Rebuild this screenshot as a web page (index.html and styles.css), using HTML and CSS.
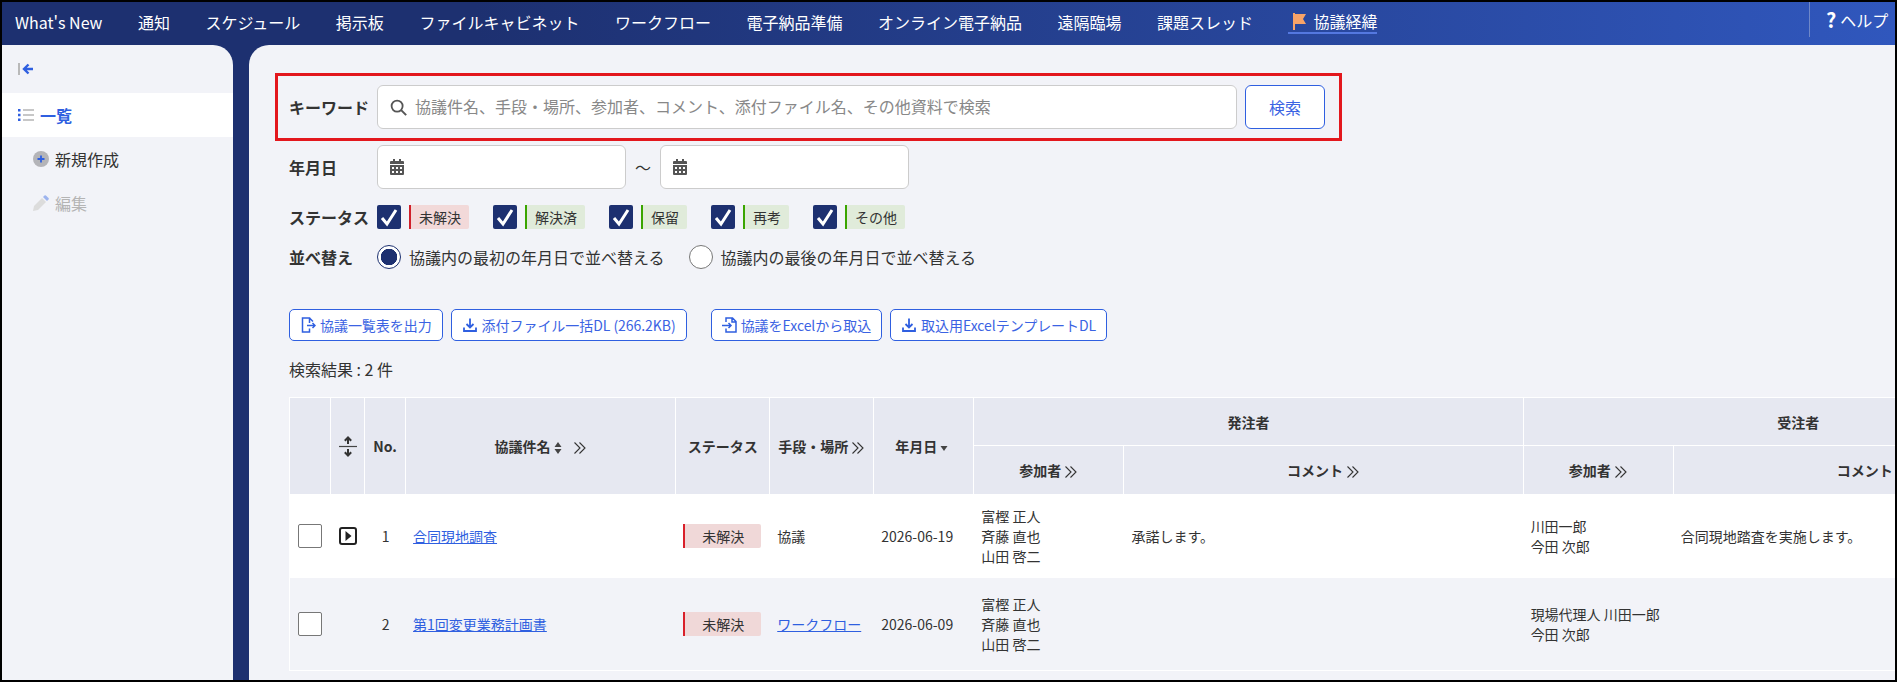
FILE: index.html

```html
<!DOCTYPE html>
<html lang="ja">
<head>
    <meta charset="UTF-8">
    <title>協議経緯</title>
    <link rel="stylesheet" href="styles.css">
</head>
<body>
    <svg class="sprite" width="0" height="0">
        <symbol id="chevrons" viewBox="0 0 14 14">
            <path d="M1.5 1.5 7 7l-5.500 5.500M6.500 1.500 12 7l-5.500 5.500" fill="none" stroke="currentColor" stroke-width="1.100"/>
        </symbol>
        <symbol id="check" viewBox="0 0 24 24">
            <path d="M5 13 10 19 19 5" fill="none" stroke="#fff" stroke-width="3"/>
        </symbol>
        <symbol id="calendar" viewBox="0 0 14 16">
            <path d="M3 0h2v2h4V0h2v2h2a1 1 0 0 1 1 1v2H0V3a1 1 0 0 1 1-1h2zM0 6h14v9a1 1 0 0 1-1 1H1a1 1 0 0 1-1-1zm2 2v2h2V8zm4 0v2h2V8zm4 0v2h2V8zm-8 4v2h2v-2zm4 0v2h2v-2zm4 0v2h2v-2z" fill="#555" fill-rule="evenodd"/>
        </symbol>
        <symbol id="download" viewBox="0 0 16 16">
            <path d="M8 1.500v8.500M4.500 7 8 10.500 11.500 7M2 10.500v3.500h12v-3.500" fill="none" stroke="#2f5fe0" stroke-width="1.800"/>
        </symbol>
    </svg>

    <div class="app">
        <header class="topbar">
            <nav class="topnav">
                <a>What's New</a>
                <a>通知</a>
                <a>スケジュール</a>
                <a>掲示板</a>
                <a>ファイルキャビネット</a>
                <a>ワークフロー</a>
                <a>電子納品準備</a>
                <a>オンライン電子納品</a>
                <a>遠隔臨場</a>
                <a>課題スレッド</a>
                <a class="current">
                    <svg width="15" height="17" viewBox="0 0 15 17"><path d="M1 0h2v17H1zM3 1h11l-3 5 3 5H3z" fill="#f8a368"/></svg>
                    協議経緯
                </a>
            </nav>
            <a class="help"><b>?</b>ヘルプ</a>
        </header>

        <div class="columns">
            <aside class="sidebar">
                <div class="collapse">
                    <svg width="16" height="14" viewBox="0 0 16 14"><path d="M1 1v12" stroke="#b9b9b9" stroke-width="2"/><path d="M15 7H6M10.500 2.500 6 7l4.500 4.500" fill="none" stroke="#2f5fe0" stroke-width="2.400"/></svg>
                </div>
                <a class="side-item active">
                    <svg width="16" height="14" viewBox="0 0 16 14"><path d="M5 2h11M5 7h11M5 12h11" stroke="#b5b5b5" stroke-width="1.600"/><path d="M0 1h2.500v2.500H0zM0 5.800h2.500v2.500H0zM0 10.600h2.500v2.500H0z" fill="#2f5fe0"/></svg>
                    一覧
                </a>
                <a class="side-item sub">
                    <svg width="16" height="16" viewBox="0 0 16 16"><circle cx="8" cy="8" r="8" fill="#b4b4b8"/><path d="M8 4.500v7M4.500 8h7" stroke="#2f5fe0" stroke-width="1.800"/></svg>
                    新規作成
                </a>
                <a class="side-item sub disabled">
                    <svg width="16" height="16" viewBox="0 0 16 16"><path d="M0 16l1-5 8-8 4 4-8 8z" fill="#dcdcdc"/><path d="M10 2l1.500-1.500a1 1 0 0 1 1.400 0l2.600 2.600a1 1 0 0 1 0 1.400L14 6z" fill="#9db4ee"/></svg>
                    編集
                </a>
            </aside>

            <main class="content">
                <div class="form-row search-row">
                    <label class="form-label">キーワード</label>
                    <div class="text-box keyword">
                        <svg width="17" height="17" viewBox="0 0 16 16"><circle cx="6.700" cy="6.700" r="5.200" fill="none" stroke="#555" stroke-width="1.700"/><path d="m10.500 10.500 4.700 4.700" stroke="#555" stroke-width="1.900"/></svg>
                        <span class="placeholder">協議件名、手段・場所、参加者、コメント、添付ファイル名、その他資料で検索</span>
                    </div>
                    <button class="search-btn">検索</button>
                </div>

                <div class="form-row date-row">
                    <label class="form-label">年月日</label>
                    <div class="text-box date"><svg width="14" height="16"><use href="#calendar"/></svg></div>
                    <span class="tilde">～</span>
                    <div class="text-box date"><svg width="14" height="16"><use href="#calendar"/></svg></div>
                </div>

                <div class="form-row status-row">
                    <label class="form-label">ステータス</label>
                    <span class="check-item"><svg class="checkbox" width="24" height="24"><use href="#check"/></svg><span class="tag red">未解決</span></span>
                    <span class="check-item"><svg class="checkbox" width="24" height="24"><use href="#check"/></svg><span class="tag green">解決済</span></span>
                    <span class="check-item"><svg class="checkbox" width="24" height="24"><use href="#check"/></svg><span class="tag green">保留</span></span>
                    <span class="check-item"><svg class="checkbox" width="24" height="24"><use href="#check"/></svg><span class="tag green">再考</span></span>
                    <span class="check-item"><svg class="checkbox" width="24" height="24"><use href="#check"/></svg><span class="tag green">その他</span></span>
                </div>

                <div class="form-row sort-row">
                    <label class="form-label">並べ替え</label>
                    <span class="radio-item"><span class="radio on"></span>協議内の最初の年月日で並べ替える</span>
                    <span class="radio-item"><span class="radio"></span>協議内の最後の年月日で並べ替える</span>
                </div>

                <div class="actions">
                    <button class="action-btn">
                        <svg width="16" height="16" viewBox="0 0 16 16"><path d="M9.500 6V1H2.500v14h7v-3.500M9.500 1 13 4.500M7 8.500h8M12.500 6l2.500 2.500-2.500 2.500" fill="none" stroke="#2f5fe0" stroke-width="1.500"/></svg>
                        協議一覧表を出力
                    </button>
                    <button class="action-btn">
                        <svg width="16" height="16"><use href="#download"/></svg>
                        添付ファイル一括DL (266.2KB)
                    </button>
                    <button class="action-btn spaced">
                        <svg width="15" height="16" viewBox="0 0 15 16"><path d="M4 5V1h6.500L14 4.500V15H4v-3.500M10 1v4h4M0 8.500h9M6.500 6 9 8.500 6.500 11" fill="none" stroke="#2f5fe0" stroke-width="1.500"/></svg>
                        協議をExcelから取込
                    </button>
                    <button class="action-btn">
                        <svg width="16" height="16"><use href="#download"/></svg>
                        取込用ExcelテンプレートDL
                    </button>
                </div>

                <p class="result-count">検索結果 : 2 件</p>

                <table class="list">
                    <colgroup>
                        <col class="c-check"><col class="c-toggle"><col class="c-no"><col class="c-name"><col class="c-status"><col class="c-means"><col class="c-date">
                        <col class="c-people"><col class="c-comment-first"><col class="c-people"><col class="c-comment">
                    </colgroup>
                    <thead>
                        <tr>
                            <th rowspan="2"></th>
                            <th rowspan="2">
                                <svg width="18" height="21" viewBox="0 0 18 21"><path d="M0 10.500h18" stroke="#444" stroke-width="1.200"/><path d="M9 8V2M5.800 4.800 9 1.500l3.200 3.300M9 13v6M5.800 16.200 9 19.500l3.200-3.300" fill="none" stroke="#333" stroke-width="2"/></svg>
                            </th>
                            <th rowspan="2">No.</th>
                            <th rowspan="2">協議件名
                                <svg class="sort" width="8" height="14" viewBox="0 0 8 14"><path d="M4 1 7.500 6H.5zM4 13 .5 8h7z" fill="#444"/></svg>
                                <svg class="chev name-chev" width="14" height="14"><use href="#chevrons"/></svg>
                            </th>
                            <th rowspan="2">ステータス</th>
                            <th rowspan="2">手段・場所<svg class="chev" width="14" height="14"><use href="#chevrons"/></svg></th>
                            <th rowspan="2">年月日 <svg class="sort sort-down" width="8" height="6" viewBox="0 0 8 6"><path d="M4 6 .5 1h7z" fill="#444"/></svg></th>
                            <th class="group" colspan="2">発注者</th>
                            <th class="group" colspan="2">受注者</th>
                        </tr>
                        <tr>
                            <th>参加者<svg class="chev" width="14" height="14"><use href="#chevrons"/></svg></th>
                            <th>コメント<svg class="chev" width="14" height="14"><use href="#chevrons"/></svg></th>
                            <th>参加者<svg class="chev" width="14" height="14"><use href="#chevrons"/></svg></th>
                            <th>コメント<svg class="chev" width="14" height="14"><use href="#chevrons"/></svg></th>
                        </tr>
                    </thead>
                    <tbody>
                        <tr class="row-one">
                            <td class="cell-check"><span class="box"></span></td>
                            <td class="center">
                                <svg class="toggle" width="18" height="18" viewBox="0 0 18 18"><rect x="1" y="1" width="16" height="16" rx="2" fill="none" stroke="#222" stroke-width="2"/><path d="M6.500 4v10l6-5z" fill="#222"/></svg>
                            </td>
                            <td class="center">1</td>
                            <td><a class="link">合同現地調査</a></td>
                            <td><span class="pill">未解決</span></td>
                            <td>協議</td>
                            <td>2026-06-19</td>
                            <td>富樫 正人<br>斉藤 直也<br>山田 啓二</td>
                            <td>承諾します。</td>
                            <td>川田一郎<br>今田 次郎</td>
                            <td>合同現地踏査を実施します。</td>
                        </tr>
                        <tr class="row-two">
                            <td class="cell-check"><span class="box"></span></td>
                            <td></td>
                            <td class="center">2</td>
                            <td><a class="link">第1回変更業務計画書</a></td>
                            <td><span class="pill">未解決</span></td>
                            <td><a class="link">ワークフロー</a></td>
                            <td>2026-06-09</td>
                            <td>富樫 正人<br>斉藤 直也<br>山田 啓二</td>
                            <td></td>
                            <td>現場代理人 川田一郎<br>今田 次郎</td>
                            <td></td>
                        </tr>
                    </tbody>
                </table>
            </main>
        </div>
    </div>
</body>
</html>
```

FILE: styles.css

```css
* {
    box-sizing: border-box;
}
html, body {
    height: 100%;
    margin: 0;
    overflow: hidden;
}
body {
    padding: 2px;
    background: #000;
    font-family: "Noto Sans CJK JP", "Noto Sans", sans-serif;
    font-size: 16px;
    color: #333;
}
.sprite {
    position: absolute;
}
.app {
    display: flex;
    flex-direction: column;
    height: 100%;
    background: #1d3070;
}

/* top bar */
.topbar {
    display: flex;
    justify-content: space-between;
    height: 43px;
    flex: none;
    padding-left: 13px;
    color: #fff;
    background: linear-gradient(90deg, #1d3070 0%, #1d3070 25%, #3057bd 100%);
}
.topnav {
    display: flex;
    align-items: flex-start;
    gap: 35.500px;
    padding-top: 8px;
}
.topnav a {
    display: flex;
    align-items: center;
    gap: 6px;
    height: 24px;
    line-height: 22px;
    white-space: nowrap;
}
.topnav a.current {
    padding-left: 4px;
    border-bottom: 2px solid #5478e0;
}
.help {
    display: flex;
    align-items: center;
    height: 35px;
    width: 86px;
    padding-left: 16px;
    border-left: 1px solid #6f88c8;
    white-space: nowrap;
}
.help b {
    margin-right: 4px;
    font-size: 20px;
}

.columns {
    display: flex;
    gap: 16px;
    flex: 1;
    min-height: 0;
}

/* side menu */
.sidebar {
    width: 231px;
    flex: none;
    background: #f2f3f8;
    border-top-right-radius: 20px;
}
.collapse {
    display: flex;
    align-items: center;
    height: 48px;
    padding-left: 16px;
}
.side-item {
    display: flex;
    align-items: center;
    gap: 6px;
    height: 44px;
    padding-left: 16px;
}
.side-item.active {
    background: #fff;
    color: #2f5fe0;
    font-weight: 700;
}
.side-item.sub {
    padding-left: 31px;
}
.side-item.disabled {
    color: #b4b4b4;
}

/* main */
.content {
    flex: 1;
    min-width: 0;
    padding: 28px 0 0 40px;
    overflow: hidden;
    background: #f2f3f8;
    border-top-left-radius: 20px;
}
.form-row {
    display: flex;
    align-items: center;
}
.form-label {
    width: 88px;
    flex: none;
    font-weight: 700;
    white-space: nowrap;
}
.search-row {
    width: 1067px;
    height: 68px;
    margin-left: -14px;
    padding-left: 11px;
    border: 3px solid #e3171d;
}
.text-box {
    display: flex;
    align-items: center;
    height: 44px;
    padding-left: 12px;
    background: #fff;
    border: 1px solid #ccc;
    border-radius: 6px;
}
.keyword {
    width: 860px;
    gap: 8px;
}
.placeholder {
    margin-bottom: 2px;
    color: #888;
}
.search-btn {
    width: 80px;
    height: 44px;
    margin-left: 8px;
    background: #fff;
    border: 1px solid #2f5fe0;
    border-radius: 6px;
    color: #3b63e3;
    font: inherit;
}
.date-row {
    margin-top: 4px;
}
.date {
    width: 249px;
}
.tilde {
    width: 34px;
    text-align: center;
    white-space: nowrap;
}
.status-row {
    margin-top: 16px;
}
.check-item {
    display: flex;
    margin-right: 24px;
}
.checkbox {
    margin-right: 8px;
    background: #1d3070;
    border-radius: 2px;
}
.tag {
    height: 24px;
    padding: 0 8px;
    border-left: 2px solid;
    border-radius: 0 2px 2px 0;
    font-size: 14px;
    line-height: 24px;
}
.tag.red {
    border-color: #d0202a;
    background: #f2d9d9;
}
.tag.green {
    border-color: #3aa500;
    background: #e0ebda;
}
.sort-row {
    margin-top: 16px;
}
.radio-item {
    display: flex;
    align-items: center;
    gap: 8px;
    margin-right: 24px;
    line-height: 24px;
}
.radio {
    width: 24px;
    height: 24px;
    background: #fff;
    border: 1px solid #777;
    border-radius: 50%;
}
.radio.on {
    border-color: #1d3070;
    background: radial-gradient(circle, #1d3070 0, #1d3070 8px, #fff 8.500px);
}
.actions {
    display: flex;
    gap: 8px;
    margin-top: 40px;
}
.action-btn {
    display: flex;
    align-items: center;
    gap: 4px;
    height: 32px;
    padding: 0 10px;
    background: #fff;
    border: 1px solid #2f5fe0;
    border-radius: 5px;
    color: #3b63e3;
    font: inherit;
    font-size: 14px;
    letter-spacing: -0.050px;
    white-space: nowrap;
}
.action-btn.spaced {
    margin-left: 16px;
}
.result-count {
    margin: 16px 0;
    line-height: 24px;
}

/* table */
.list {
    width: 1786px;
    table-layout: fixed;
    border-collapse: separate;
    border-spacing: 0;
    border: 1px solid #fff;
    font-size: 14px;
    line-height: 20px;
}
.c-check { width: 41px; }
.c-toggle { width: 34px; }
.c-no { width: 41px; }
.c-name { width: 270px; }
.c-status { width: 94px; }
.c-means { width: 104px; }
.c-date { width: 100px; }
.c-people { width: 150px; }
.c-comment-first { width: 399px; }
.c-comment { width: 400px; }
.list th {
    height: 48px;
    padding: 0;
    background: #e6e8f1;
    border-right: 1px solid #fff;
    text-align: center;
    vertical-align: middle;
    white-space: nowrap;
}
.list th.group {
    border-bottom: 1px solid #fff;
}
.list th svg {
    vertical-align: middle;
}
.list .chev {
    margin-left: 3px;
    font-weight: 400;
}
.list .name-chev {
    margin-left: 8px;
}
.list .sort-down {
    margin-right: 4px;
}
.list td {
    padding: 0 7px;
    vertical-align: middle;
}
.list .center {
    text-align: center;
}
.row-one td {
    height: 84px;
    background: #fff;
}
.row-two td {
    height: 92px;
    background: #f2f3f8;
}
.list .cell-check {
    padding: 0 0 0 8px;
}
.box {
    display: block;
    width: 24px;
    height: 24px;
    background: #fff;
    border: 1px solid #777;
    border-radius: 2px;
}
.toggle {
    display: block;
    margin: 0 auto;
}
.link {
    color: #2f5fe0;
    text-decoration: underline;
    white-space: nowrap;
}
.pill {
    display: block;
    width: 78px;
    height: 24px;
    background: #f0d8d8;
    border-left: 2px solid #d9202a;
    border-radius: 0 2px 2px 0;
    text-align: center;
    line-height: 24px;
}
```
